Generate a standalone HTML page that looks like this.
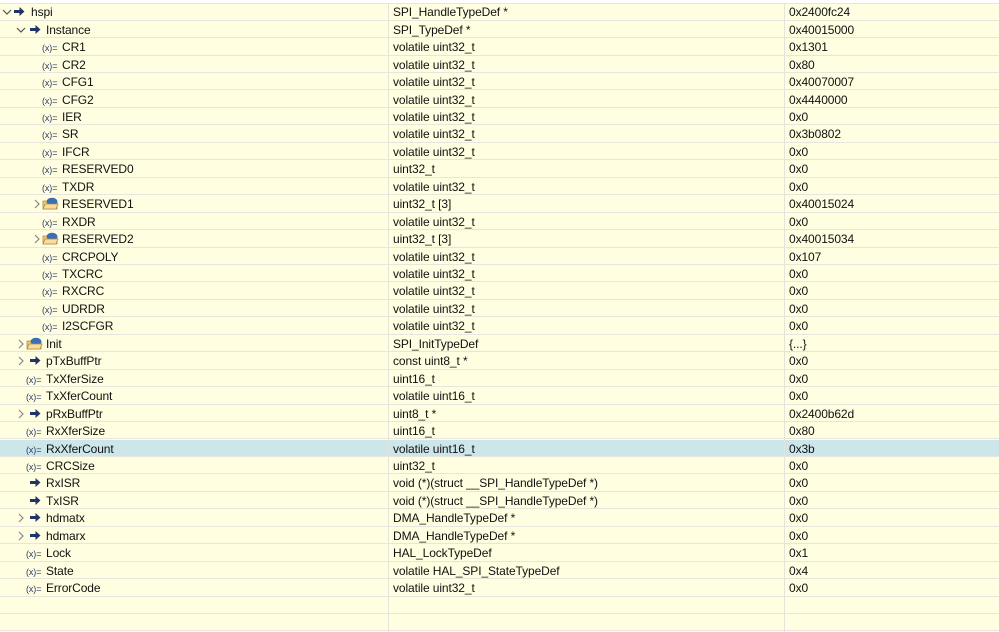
<!DOCTYPE html>
<html><head><meta charset="utf-8"><style>
html,body{margin:0;padding:0}
body{width:999px;height:632px;overflow:hidden;background:#fffee0;font-family:"Liberation Sans",sans-serif;font-size:12px;color:#111;position:relative}
.r{position:absolute;left:0;width:999px;height:17.45px;box-sizing:border-box;border-bottom:1px solid #e6e6dc}
.r.sel{background:#cde6ea}
.r span{position:absolute;top:2px;white-space:nowrap;line-height:14px;letter-spacing:-0.1px}
.t{left:393px}.v{left:789px}
.vl{position:absolute;top:3px;bottom:0;width:1px;background:#e4e4da}
.topbar{position:absolute;left:0;top:0;width:999px;height:3px;background:#fff;border-bottom:1px solid #e6e6dc}
.x{font-size:9px;color:#2a3a66;letter-spacing:-0.3px;top:3px!important}
svg{position:absolute}
</style></head><body>
<div class="topbar"></div>
<div id="rows"></div>
<div class="vl" style="left:388px"></div>
<div class="vl" style="left:784px"></div>
<script>
(function(){
var A='<svg width="11" height="9" viewBox="0 0 11 9" style="top:4px;left:LEFTpx"><path d="M0 3h5.5V0l5 4.5-5 4.5V6H0z" fill="#1f3468"/></svg>';
var F='<svg width="17" height="13" viewBox="0 0 17 13" style="top:2px;left:LEFTpx"><path d="M1 4h5l1 1h8v7H1z" fill="#f2c97a" stroke="#b58a3a" stroke-width="0.8"/><ellipse cx="10" cy="4.5" rx="5.5" ry="3.8" fill="#3b6fb5"/><path d="M1 12l2-5h13l-2 5z" fill="#f7dc9e" stroke="#b58a3a" stroke-width="0.8"/></svg>';
var Co='<svg width="10" height="10" viewBox="0 0 10 10" style="top:4px;left:LEFTpx"><path d="M1 3l4 4 4-4" fill="none" stroke="#555" stroke-width="1.2"/></svg>';
var Cc='<svg width="10" height="10" viewBox="0 0 10 10" style="top:4px;left:LEFTpx"><path d="M3 1l4 4-4 4" fill="none" stroke="#888" stroke-width="1.2"/></svg>';
var d=[
[0,'o','a','hspi','SPI_HandleTypeDef *','0x2400fc24'],
[1,'o','a','Instance','SPI_TypeDef *','0x40015000'],
[2,'','x','CR1','volatile uint32_t','0x1301'],
[2,'','x','CR2','volatile uint32_t','0x80'],
[2,'','x','CFG1','volatile uint32_t','0x40070007'],
[2,'','x','CFG2','volatile uint32_t','0x4440000'],
[2,'','x','IER','volatile uint32_t','0x0'],
[2,'','x','SR','volatile uint32_t','0x3b0802'],
[2,'','x','IFCR','volatile uint32_t','0x0'],
[2,'','x','RESERVED0','uint32_t','0x0'],
[2,'','x','TXDR','volatile uint32_t','0x0'],
[2,'c','f','RESERVED1','uint32_t [3]','0x40015024'],
[2,'','x','RXDR','volatile uint32_t','0x0'],
[2,'c','f','RESERVED2','uint32_t [3]','0x40015034'],
[2,'','x','CRCPOLY','volatile uint32_t','0x107'],
[2,'','x','TXCRC','volatile uint32_t','0x0'],
[2,'','x','RXCRC','volatile uint32_t','0x0'],
[2,'','x','UDRDR','volatile uint32_t','0x0'],
[2,'','x','I2SCFGR','volatile uint32_t','0x0'],
[1,'c','f','Init','SPI_InitTypeDef','{...}'],
[1,'c','a','pTxBuffPtr','const uint8_t *','0x0'],
[1,'','x','TxXferSize','uint16_t','0x0'],
[1,'','x','TxXferCount','volatile uint16_t','0x0'],
[1,'c','a','pRxBuffPtr','uint8_t *','0x2400b62d'],
[1,'','x','RxXferSize','uint16_t','0x80'],
[1,'','x','RxXferCount','volatile uint16_t','0x3b'],
[1,'','x','CRCSize','uint32_t','0x0'],
[1,'','a','RxISR','void (*)(struct __SPI_HandleTypeDef *)','0x0'],
[1,'','a','TxISR','void (*)(struct __SPI_HandleTypeDef *)','0x0'],
[1,'c','a','hdmatx','DMA_HandleTypeDef *','0x0'],
[1,'c','a','hdmarx','DMA_HandleTypeDef *','0x0'],
[1,'','x','Lock','HAL_LockTypeDef','0x1'],
[1,'','x','State','volatile HAL_SPI_StateTypeDef','0x4'],
[1,'','x','ErrorCode','volatile uint32_t','0x0'],
['e'],['e']];
var h='';
for(var i=0;i<d.length;i++){
 var r=d[i],yy=(3.25+i*17.45).toFixed(2);
 h+='<div class="r'+(i==25?' sel':'')+'" style="top:'+yy+'px">';
 if(r[0]!=='e'){
  var L=r[0],ch=[2,16,32][L],ic=[14,30,46][L],nm=[31,46,62][L];
  if(r[1]=='o')h+=Co.replace('LEFT',ch);
  if(r[1]=='c')h+=Cc.replace('LEFT',ch);
  if(r[2]=='a')h+=A.replace('LEFT',ic);
  if(r[2]=='f')h+=F.replace('LEFT',ic-4);
  if(r[2]=='x')h+='<span class="x" style="left:'+(ic-4)+'px">(x)=</span>';
  h+='<span style="left:'+nm+'px">'+r[3]+'</span><span class="t">'+r[4]+'</span><span class="v">'+r[5]+'</span>';
 }
 h+='</div>';
}
document.getElementById('rows').innerHTML=h;
})();
</script>
</body></html>
